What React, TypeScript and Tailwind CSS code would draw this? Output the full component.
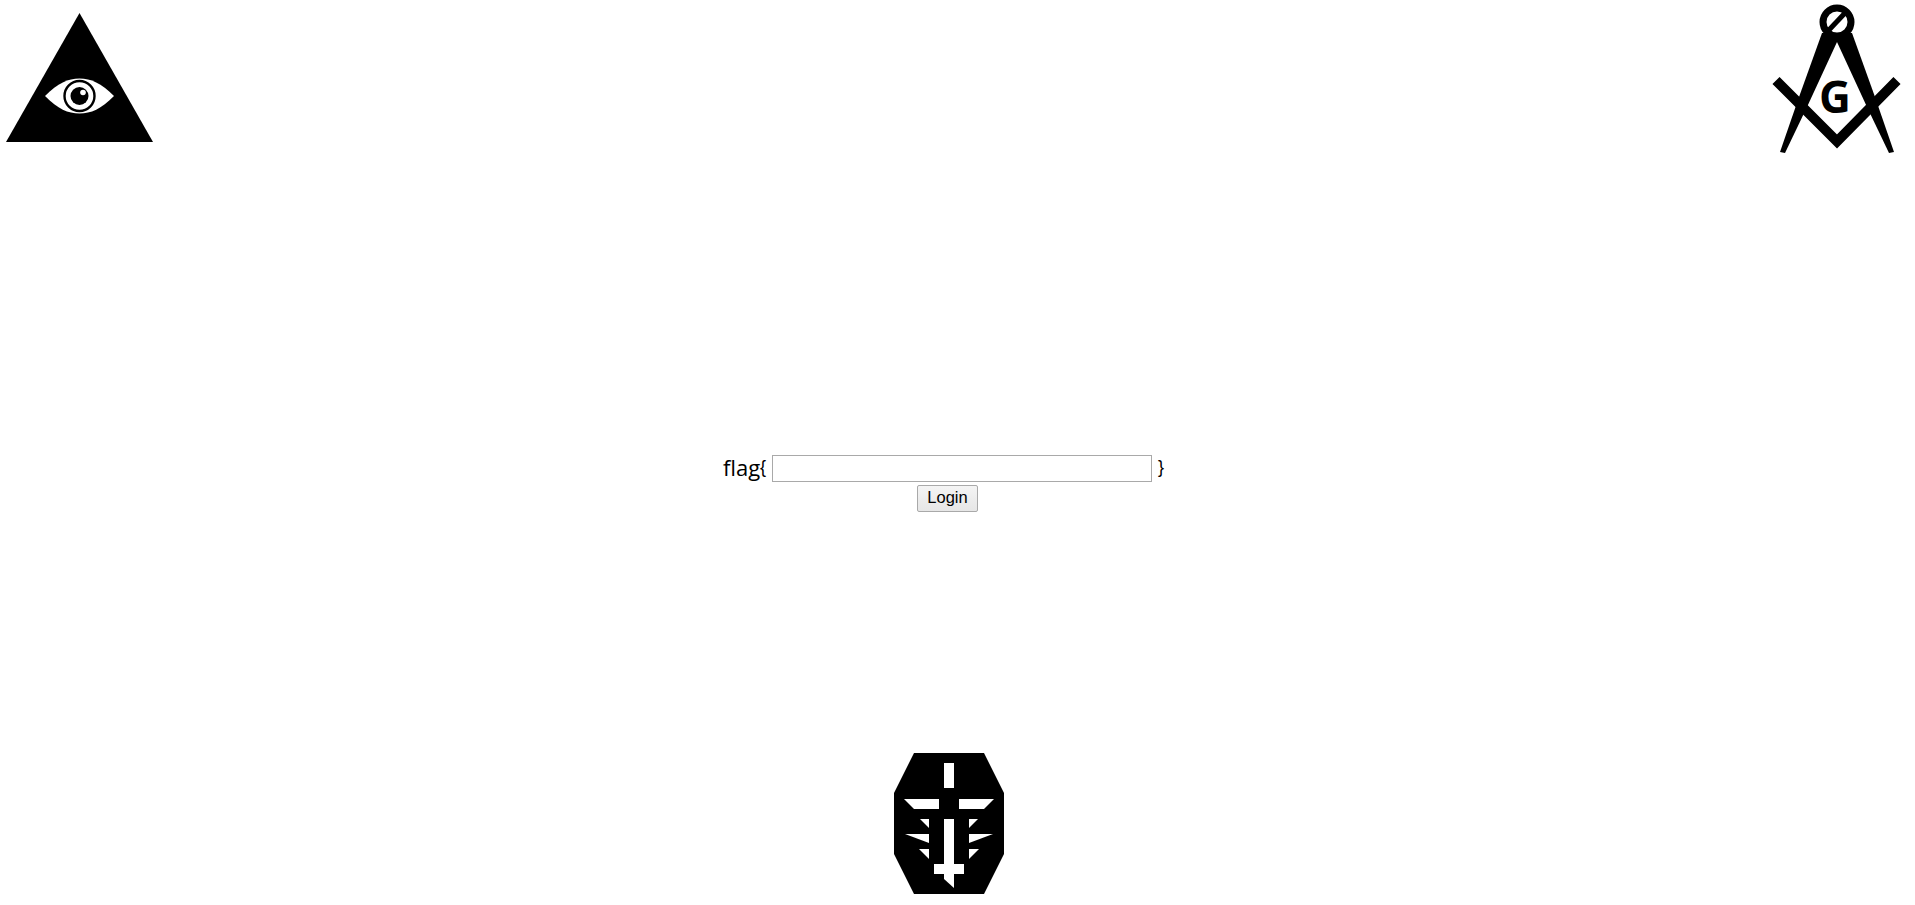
import React from "react";

const EyeLogo = () => (
  <svg viewBox="0 0 147 129" className="w-[147px] h-[129px] block">
    <polygon points="73.5,0 147,129 0,129" fill="#000" />
    <path d="M39,83 C52,70 62,65.5 73.5,65.5 C85,65.5 95,70 108,83 C95,96 85,100.5 73.5,100.5 C62,100.5 52,96 39,83 Z" fill="#fff" />
    <circle cx="73.5" cy="83" r="15" fill="none" stroke="#000" strokeWidth="2.4" />
    <circle cx="73.5" cy="83" r="9" fill="#000" />
    <circle cx="77" cy="79.5" r="2.8" fill="#fff" />
  </svg>
);

const CompassLogo = () => (
  <svg viewBox="0 0 155 160" className="w-[155px] h-[160px] block">
    <circle cx="77" cy="22" r="14" fill="none" stroke="#000" strokeWidth="7" />
    <path d="M68,31 L85,13" stroke="#000" strokeWidth="5" />
    <path d="M62,33 L77,33 L77,42 L47,107 L25,153 L20,152 L39,97 Z" fill="#000" />
    <path d="M92,33 L77,33 L77,42 L107,107 L129,153 L134,152 L115,97 Z" fill="#000" />
    <path d="M16,80.5 L77,141.5 L137,80.5" fill="none" stroke="#000" strokeWidth="10" />
    <text x="75" y="113" textAnchor="middle" fill="#000" className="font-['Open_Sans',sans-serif] font-bold text-[44px]">G</text>
  </svg>
);

const CrossLogo = () => (
  <svg viewBox="0 0 110 141" className="w-[110px] h-[141px] block">
    <polygon points="20,0 90,0 110,40 110,101 90,141 20,141 0,101 0,40" fill="#000" />
    <g fill="#fff">
      <rect x="50" y="10" width="10" height="25" />
      <polygon points="10,46 45,46 45,56 20,56" />
      <polygon points="65,46 100,46 90,56 65,56" />
      <rect x="50" y="66" width="10" height="51" />
      <rect x="40" y="111" width="30" height="10" />
      <polygon points="50,118 60,118 60,135 50,126" />
      <polygon points="26,66 35,66 35,75" />
      <polygon points="84,66 75,66 75,75" />
      <polygon points="11,81 35,81 35,90" />
      <polygon points="99,81 75,81 75,90" />
      <polygon points="25,96 35,96 35,106" />
      <polygon points="85,96 75,96 75,106" />
    </g>
  </svg>
);

export default function App() {
  return (
    <div className="h-[905px] bg-white flex flex-col overflow-hidden font-['Liberation_Sans',sans-serif] text-black">
      <div className="flex justify-between items-start h-[160px] pl-[6px]">
        <div className="pt-[13px]"><EyeLogo /></div>
        <CompassLogo />
      </div>

      <div className="mt-[295px] ml-[723px] w-[450px]">
        <div className="flex items-center h-[27px]">
          <span className="w-[37px] text-[22px] leading-[27px] -mt-[3px] font-['Open_Sans',sans-serif]">flag</span>
          <span className="w-[6px] text-[18px] leading-[27px] -mt-[3px] font-light">{"{"}</span>
          <input className="w-[380px] h-[27px] ml-[6px] border border-[#a9a9a9] bg-white outline-none" />
          <span className="text-[18px] leading-[27px] -mt-[3px] ml-[6px]">{"}"}</span>
        </div>
        <button className="block ml-[194px] mt-[3px] w-[61px] h-[27px] pb-[2px] text-[16.5px] leading-none rounded-[2px] bg-gradient-to-b from-[#f4f4f4] to-[#e6e6e6] border border-[#a9a9a9]">
          Login
        </button>
      </div>

      <div className="mt-[241px] ml-[894px]"><CrossLogo /></div>
    </div>
  );
}
